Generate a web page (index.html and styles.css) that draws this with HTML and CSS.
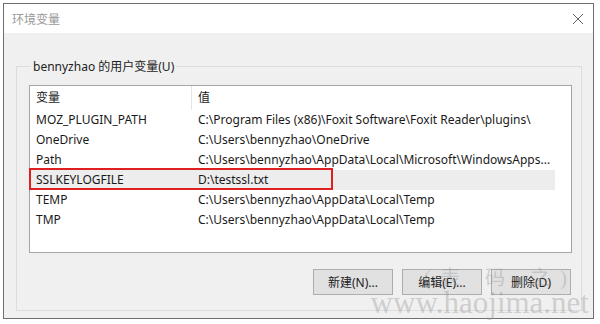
FILE: index.html
```html
<!DOCTYPE html>
<html lang="zh-CN">
<head>
    <meta charset="UTF-8">
    <title>环境变量</title>
    <link rel="stylesheet" href="styles.css">
</head>
<body>
    <div class="window">
        <div class="titlebar">
            <span class="title">环境变量</span>
            <svg class="close" width="12" height="12" viewBox="0 0 12 12">
                <path d="M1 1L11 11M11 1L1 11" stroke="#666" stroke-width="1" fill="none"/>
            </svg>
        </div>
        <div class="content">
            <fieldset class="group">
                <legend>bennyzhao 的用户变量(U)</legend>
                <div class="list">
                    <div class="row head">
                        <div class="c1">变量</div>
                        <div class="c2">值</div>
                    </div>
                    <div class="row">
                        <div class="c1">MOZ_PLUGIN_PATH</div>
                        <div class="c2">C:\Program Files (x86)\Foxit Software\Foxit Reader\plugins\</div>
                    </div>
                    <div class="row">
                        <div class="c1">OneDrive</div>
                        <div class="c2">C:\Users\bennyzhao\OneDrive</div>
                    </div>
                    <div class="row">
                        <div class="c1">Path</div>
                        <div class="c2">C:\Users\bennyzhao\AppData\Local\Microsoft\WindowsApps...</div>
                    </div>
                    <div class="row sel">
                        <div class="c1">SSLKEYLOGFILE</div>
                        <div class="c2">D:\testssl.txt</div>
                        <div class="mark"></div>
                    </div>
                    <div class="row">
                        <div class="c1">TEMP</div>
                        <div class="c2">C:\Users\bennyzhao\AppData\Local\Temp</div>
                    </div>
                    <div class="row">
                        <div class="c1">TMP</div>
                        <div class="c2">C:\Users\bennyzhao\AppData\Local\Temp</div>
                    </div>
                </div>
                <div class="buttons">
                    <button>新建(N)...</button>
                    <button>编辑(E)...</button>
                    <button>删除(D)</button>
                </div>
            </fieldset>
        </div>
        <div class="watermark">
            <span class="wm1">(表 码 之)</span>
            <span class="wm2">www.haojima.net</span>
        </div>
    </div>
</body>
</html>
```

FILE: styles.css
```css
body{
    margin: 0;
    padding: 3px;
    background-color: #fff;
    font-family: "Noto Sans", "Noto Sans CJK SC", sans-serif;
    font-size: 12px;
    color: #1a1a1a;
}
.window{
    position: relative;
    width: 589px;
    height: 314px;
    border: 1px solid #6f6f6f;
    background-color: #f0f0f0;
    display: flex;
    flex-direction: column;
}
.titlebar{
    height: 29px;
    background-color: #fff;
    display: flex;
    align-items: center;
    justify-content: space-between;
    padding: 0 9px 0 8px;
}
.title{
    color: #999;
    font-size: 12px;
}
.content{
    flex: 1;
    padding: 24px 11px 6px 12px;
}
.group{
    margin: 0;
    height: 242px;
    border: 1px solid #dcdcdc;
    padding: 10px 9px 0 12px;
}
.group legend{
    padding: 0 2px;
    margin-left: 2px;
    color: #222;
}
.list{
    height: 166px;
    border: 1px solid #a5a5a5;
    background-color: #fff;
    padding-right: 16px;
}
.row{
    position: relative;
    display: flex;
    height: 20px;
    line-height: 20px;
    white-space: nowrap;
}
.row.head{
    height: 24px;
    line-height: 24px;
}
.c1{
    width: 155px;
    padding-left: 6px;
}
.c2{
    padding-left: 6px;
    border-left: 1px solid transparent;
}
.head .c2{
    border-left-color: #e5e5e5;
}
.sel{
    background-color: #ededed;
}
.mark{
    position: absolute;
    left: -1px;
    top: -2px;
    width: 300px;
    height: 18px;
    border: 2px solid #e02020;
}
.buttons{
    display: flex;
    justify-content: flex-end;
    gap: 9px;
    margin-top: 16px;
    padding-right: 1px;
}
.buttons button{
    width: 80px;
    height: 26px;
    border: 1px solid #adadad;
    background-color: #e1e1e1;
    font-family: "Noto Sans", "Noto Sans CJK SC", sans-serif;
    font-size: 12px;
    color: #222;
    padding: 0;
}
.watermark{
    position: absolute;
    right: 4px;
    bottom: 0;
    display: flex;
    flex-direction: column;
    align-items: flex-end;
    font-family: "Liberation Serif", serif;
    color: rgba(150,150,150,0.4);
    pointer-events: none;
}
.wm1{
    font-size: 20px;
    letter-spacing: 10px;
    margin-right: 12px;
    line-height: 20px;
}
.wm2{
    font-size: 31px;
    line-height: 30px;
}
```
